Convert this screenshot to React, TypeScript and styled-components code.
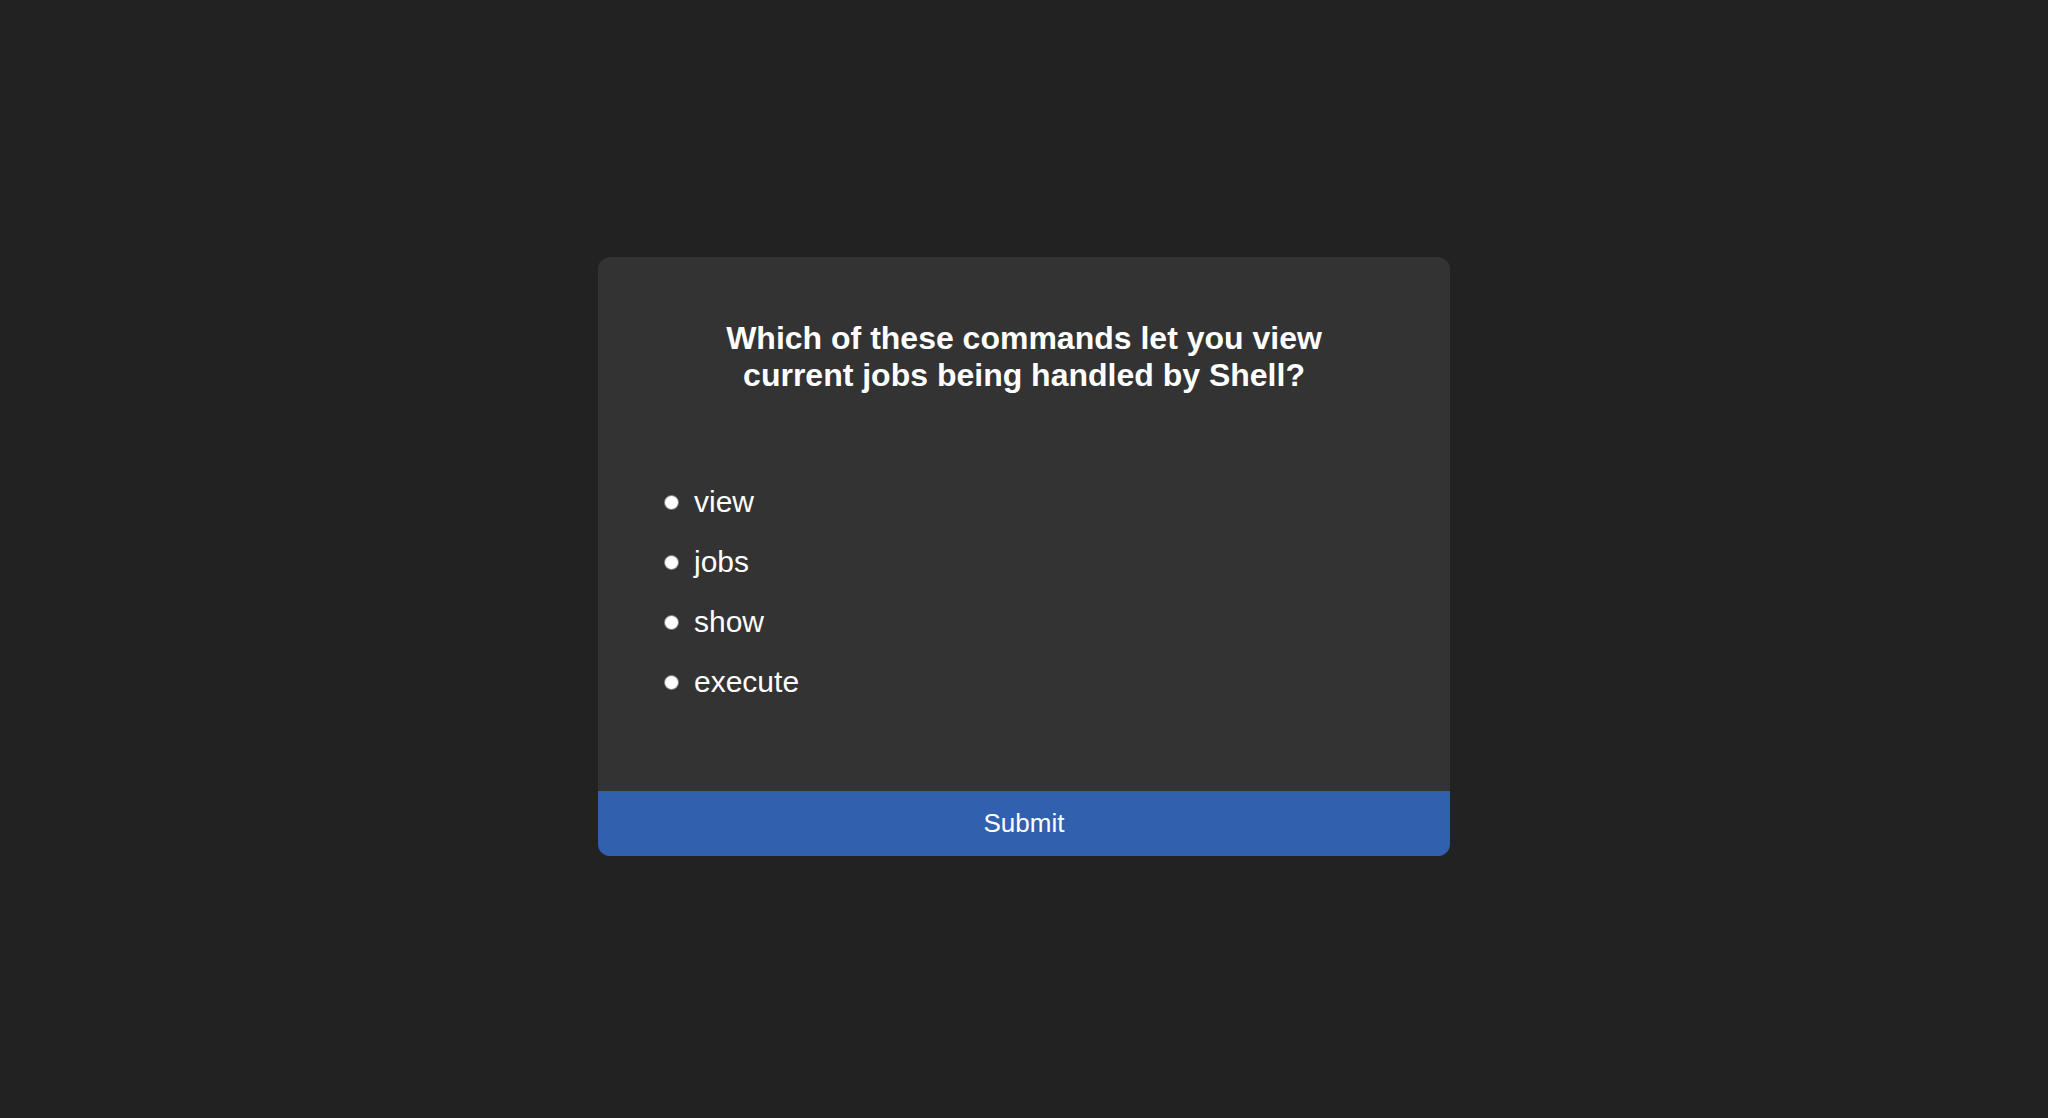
import React, { useState } from 'react';
import styled, { createGlobalStyle } from 'styled-components';

const GlobalStyle = createGlobalStyle`
  html, body {
    margin: 0;
    padding: 0;
    background: #222222;
    font-family: "Liberation Sans", Arial, Helvetica, sans-serif;
  }
`;

const Page = styled.div`
  display: flex;
  align-items: center;
  justify-content: center;
  height: 100vh;
`;

const QuizCard = styled.div`
  width: 852px;
  margin-bottom: 5px;
  background: #333333;
  border-radius: 12px;
  overflow: hidden;
`;

const QuizHeader = styled.div`
  padding: 63px 66px 92px;
`;

const Question = styled.h2`
  margin: 0 auto 91px;
  max-width: 660px;
  text-align: center;
  color: #ffffff;
  font-size: 32px;
  line-height: 37px;
  font-weight: 700;
`;

const Answers = styled.ul`
  list-style: none;
  margin: 0;
  padding: 0;
  display: flex;
  flex-direction: column;
  gap: 26px;
`;

const Answer = styled.li`
  display: flex;
  align-items: center;
  height: 34px;
`;

const Radio = styled.input`
  appearance: none;
  margin: 0 15px 0 0;
  width: 15px;
  height: 15px;
  border-radius: 50%;
  background: #ffffff;
  border: 1px solid #7a7a7a;
  box-sizing: border-box;
  cursor: pointer;

  &:checked {
    background: radial-gradient(circle, #3160ae 0 4px, #ffffff 4.5px);
  }
`;

const AnswerLabel = styled.label`
  color: #ffffff;
  font-size: 30px;
  line-height: 34px;
  cursor: pointer;
`;

const SubmitButton = styled.button`
  display: block;
  width: 100%;
  height: 65px;
  border: none;
  background: #3160ae;
  color: #ffffff;
  font-family: inherit;
  font-size: 26px;
  cursor: pointer;
`;

const answers = [
  { id: 'a', text: 'view' },
  { id: 'b', text: 'jobs' },
  { id: 'c', text: 'show' },
  { id: 'd', text: 'execute' },
];

const App = () => {
  const [picked, setPicked] = useState<string | null>(null);

  return (
    <Page>
      <GlobalStyle />
      <QuizCard>
        <QuizHeader>
          <Question>
            Which of these commands let you view current jobs being handled by Shell?
          </Question>
          <Answers>
            {answers.map(({ id, text }) => (
              <Answer key={id}>
                <Radio
                  type="radio"
                  name="answer"
                  id={id}
                  checked={picked === id}
                  onChange={() => setPicked(id)}
                />
                <AnswerLabel htmlFor={id}>{text}</AnswerLabel>
              </Answer>
            ))}
          </Answers>
        </QuizHeader>
        <SubmitButton>Submit</SubmitButton>
      </QuizCard>
    </Page>
  );
};

export default App;
